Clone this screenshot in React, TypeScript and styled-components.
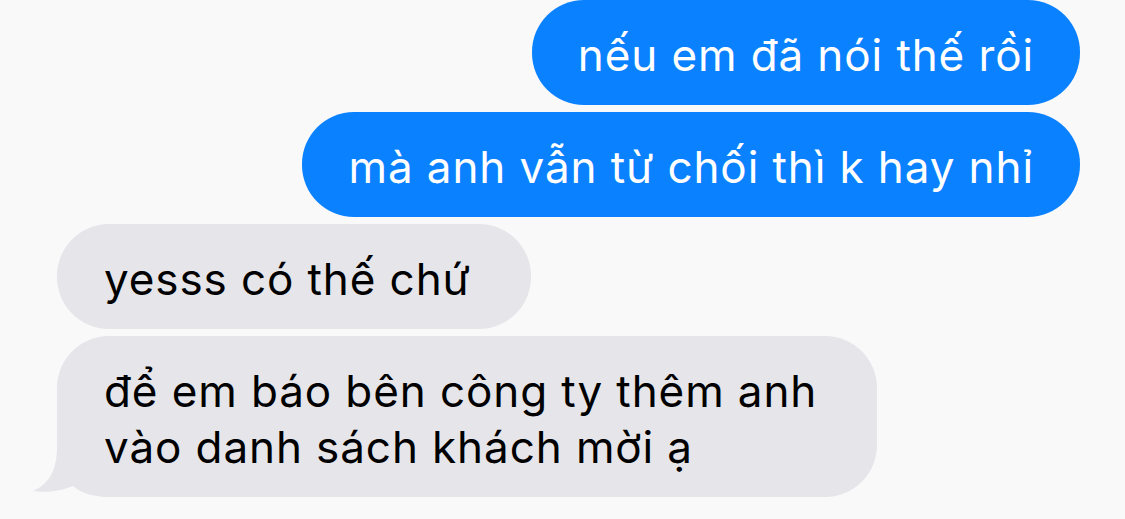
import React, { FC } from "react";
import styled, { createGlobalStyle } from "styled-components";

const GlobalStyle = createGlobalStyle`
  html, body {
    margin: 0;
    padding: 0;
    background: #f9f9f9;
  }
  body {
    font-family: Inter, "Noto Sans", "Liberation Sans", sans-serif;
    -webkit-font-smoothing: antialiased;
  }
`;

const Thread = styled.div`
  width: 1125px;
  height: 519px;
  box-sizing: border-box;
  padding: 0 45px 0 57px;
  display: flex;
  flex-direction: column;
  gap: 7px;
  overflow: hidden;
`;

const Row = styled.div<{ $mine?: boolean }>`
  display: flex;
  justify-content: ${(p) => (p.$mine ? "flex-end" : "flex-start")};
`;

const Bubble = styled.div<{ $mine?: boolean }>`
  position: relative;
  box-sizing: border-box;
  padding: ${(p) => (p.$mine ? "27px 46px 22px 46px" : "27px 60px 22px 47px")};
  border-radius: 52px;
  font-size: 44px;
  line-height: 56px;
  letter-spacing: 0.9px;
  background: ${(p) => (p.$mine ? "#0a82ff" : "#e5e5ea")};
  color: ${(p) => (p.$mine ? "#ffffff" : "#000000")};
  white-space: pre-line;
`;

const Tail = styled.svg`
  position: absolute;
  left: -26px;
  bottom: 0;
  width: 80px;
  height: 50px;
  display: block;
`;

const Text = styled.span`
  position: relative;
`;

interface MessageProps {
  text: string;
  mine?: boolean;
  tail?: boolean;
}

const Message: FC<MessageProps> = ({ text, mine, tail }) => (
  <Row $mine={mine}>
    <Bubble $mine={mine}>
      {tail && (
        <Tail viewBox="0 0 80 50">
          <path
            d="M26 0 C26 26 16 38 2 44 C14 46 30 44 42 39 C50 46 60 49 76 50 L76 0 Z"
            fill="#e5e5ea"
          />
        </Tail>
      )}
      <Text>{text}</Text>
    </Bubble>
  </Row>
);

export default function App() {
  return (
    <>
      <GlobalStyle />
      <Thread>
        <Message mine text="nếu em đã nói thế rồi" />
        <Message mine text="mà anh vẫn từ chối thì k hay nhỉ" />
        <Message text="yesss có thế chứ" />
        <Message
          tail
          text={"để em báo bên công ty thêm anh\nvào danh sách khách mời ạ"}
        />
      </Thread>
    </>
  );
}
